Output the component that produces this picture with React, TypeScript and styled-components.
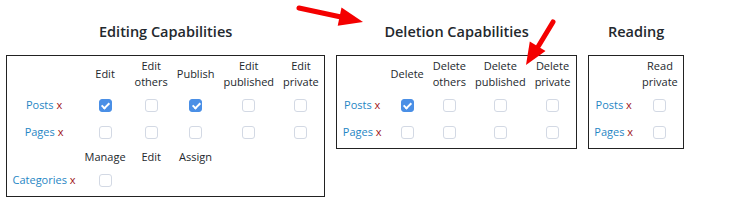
import React from 'react';
import styled, { createGlobalStyle } from 'styled-components';

const GlobalStyle = createGlobalStyle`
  html, body {
    margin: 0;
    padding: 0;
    background: #fff;
  }
  body {
    font-family: 'Open Sans', 'Noto Sans', sans-serif;
    color: #23282d;
  }
`;

interface Row {
  label: string;
  values: (boolean | null)[];
}

interface Block {
  header: string[][];
  rows: Row[];
}

interface Section {
  title: string;
  blocks: Block[];
}

const sections: Section[] = [
  {
    title: 'Editing Capabilities',
    blocks: [
      {
        header: [['Edit'], ['Edit', 'others'], ['Publish'], ['Edit', 'published'], ['Edit', 'private']],
        rows: [
          { label: 'Posts', values: [true, false, true, false, false] },
          { label: 'Pages', values: [false, false, false, false, false] },
        ],
      },
      {
        header: [['Manage'], ['Edit'], ['Assign'], [], []],
        rows: [{ label: 'Categories', values: [false, null, null, null, null] }],
      },
    ],
  },
  {
    title: 'Deletion Capabilities',
    blocks: [
      {
        header: [['Delete'], ['Delete', 'others'], ['Delete', 'published'], ['Delete', 'private']],
        rows: [
          { label: 'Posts', values: [true, false, false, false] },
          { label: 'Pages', values: [false, false, false, false] },
        ],
      },
    ],
  },
  {
    title: 'Reading',
    blocks: [
      {
        header: [['Read', 'private']],
        rows: [
          { label: 'Posts', values: [false] },
          { label: 'Pages', values: [false] },
        ],
      },
    ],
  },
];

class Capabilities extends React.Component<{ className?: string }, {}> {
  render () {
    const { className } = this.props;

    return (
      <div className={className}>
        <GlobalStyle />
        <Columns>
          {sections.map((section) => (
            <Group key={section.title}>
              <Title>{section.title}</Title>
              <Grid>
                <tbody>
                  {section.blocks.map((block, b) => (
                    <React.Fragment key={b}>
                      <tr>
                        <HeadCell />
                        {block.header.map((lines, i) => (
                          <HeadCell key={i} $later={b > 0}>
                            {lines.map((line, j) => (
                              <div key={j}>{line}</div>
                            ))}
                          </HeadCell>
                        ))}
                      </tr>
                      {block.rows.map((row) => (
                        <tr key={row.label}>
                          <LabelCell>
                            <a>{row.label}</a> <Remove>x</Remove>
                          </LabelCell>
                          {row.values.map((v, i) => (
                            <BoxCell key={i}>
                              {v !== null && <Check $on={v} />}
                            </BoxCell>
                          ))}
                        </tr>
                      ))}
                    </React.Fragment>
                  ))}
                </tbody>
              </Grid>
            </Group>
          ))}
        </Columns>

        <Arrow width="80" height="32" viewBox="0 0 80 32" style={{ left: 290, top: 0 }}>
          <line x1="9" y1="8" x2="51" y2="17" stroke="#f40000" strokeWidth="5" strokeLinecap="round" />
          <polygon points="47.7,25.7 51.5,7.6 73,22" fill="#f40000" />
        </Arrow>
        <Arrow width="40" height="50" viewBox="0 0 40 50" style={{ left: 520, top: 18 }}>
          <line x1="33" y1="4" x2="18.5" y2="28" stroke="#f40000" strokeWidth="5" strokeLinecap="round" />
          <polygon points="25.5,33 9.8,23.5 6,47" fill="#f40000" />
        </Arrow>
      </div>
    );
  }
}

const Columns = styled.div`
  display: flex;
  align-items: flex-start;
  gap: 11px;
  padding: 22px 0 0 6px;
`;

const Group = styled.div`
  display: flex;
  flex-direction: column;
  align-items: center;
`;

const Title = styled.div`
  font-size: 14.5px;
  line-height: 20px;
  font-weight: 600;
  color: #23282d;
  margin-bottom: 13px;
`;

const Grid = styled.table`
  border: 1px solid #222;
  border-spacing: 2px;
  padding-bottom: 2px;
  font-size: 11px;
  line-height: 16px;
`;

const HeadCell = styled.th<{ $later?: boolean }>`
  font-weight: 400;
  color: #23282d;
  text-align: center;
  vertical-align: middle;
  padding: ${(p) => (p.$later ? '3px 3.5px 0' : '0 3.5px')};
  white-space: nowrap;
`;

const LabelCell = styled.td`
  text-align: center;
  padding: 0 3.5px;
  white-space: nowrap;
  height: 25px;

  a {
    color: #1f86c4;
  }
`;

const Remove = styled.span`
  color: #a0161a;
`;

const BoxCell = styled.td`
  text-align: center;
  vertical-align: middle;
  padding: 0 3.5px;
`;

const Check = styled.span<{ $on: boolean }>`
  display: inline-block;
  box-sizing: border-box;
  width: 13px;
  height: 13px;
  border-radius: 3px;
  vertical-align: middle;
  position: relative;
  border: 1px solid ${(p) => (p.$on ? '#4a8fe6' : '#d3d9e4')};
  background: ${(p) => (p.$on ? '#4a8fe6' : '#fff')};

  &::after {
    content: '';
    display: ${(p) => (p.$on ? 'block' : 'none')};
    position: absolute;
    left: 3.5px;
    top: 1px;
    width: 3px;
    height: 6px;
    border: solid #fff;
    border-width: 0 2px 2px 0;
    transform: rotate(45deg);
  }
`;

const Arrow = styled.svg`
  position: absolute;
  pointer-events: none;
`;

const App = styled(Capabilities)`
  position: relative;
  width: 750px;
  height: 214px;
  overflow: hidden;
`;

export default App;
